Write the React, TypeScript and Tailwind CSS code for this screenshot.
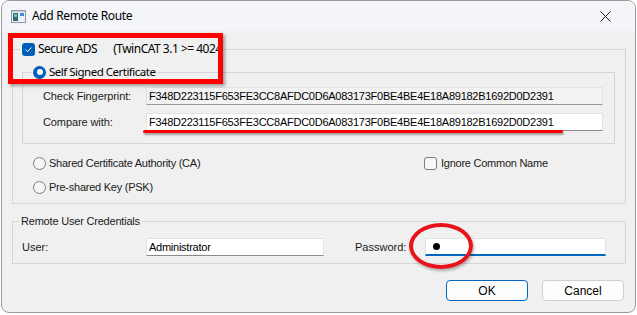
import React from 'react';

const ui = { fontFamily: '"Noto Sans", "Open Sans", sans-serif' };
const classic = { fontFamily: '"Liberation Sans", Arial, sans-serif' };

const fingerprint =
  'F348D223115F653FE3CC8AFDC0D6A083173F0BE4BE4E18A89182B1692D0D2391';

const Check = ({ checked }: { checked?: boolean }) =>
  checked ? (
    <span className="w-[13px] h-[13px] rounded-[3px] bg-[#005fb8] flex items-center justify-center shrink-0">
      <svg width="9" height="9" viewBox="0 0 10 10">
        <path d="M1.8 5.2l2.2 2.2 4.2-4.6" fill="none" stroke="#fff" strokeWidth="1.1" />
      </svg>
    </span>
  ) : (
    <span className="w-[13px] h-[13px] rounded-[3px] border border-[#7d7d7d] bg-[#f7f7f7] shrink-0" />
  );

const Radio = ({ checked }: { checked?: boolean }) =>
  checked ? (
    <span className="w-[13px] h-[13px] rounded-full bg-[#005fb8] flex items-center justify-center shrink-0">
      <span className="w-[6px] h-[6px] rounded-full bg-white" />
    </span>
  ) : (
    <span className="w-[13px] h-[13px] rounded-full border border-[#7d7d7d] bg-[#f5f5f5] shrink-0" />
  );

const Field = ({
  children,
  width,
  readOnly,
  focused
}: {
  children: React.ReactNode;
  width: string;
  readOnly?: boolean;
  focused?: boolean;
}) => (
  <div
    className={`${width} h-[18px] flex items-center pl-[2px] border border-[#e2e2e2] text-[11px] tracking-[-0.25px] text-black ${
      readOnly ? 'bg-[#f2f2f2] border-b-[#999999]' : 'bg-white border-b-[#8a8a8a]'
    } ${focused ? 'border-b-2 border-b-[#0067c0]' : ''}`}
    style={classic}
  >
    {children}
  </div>
);

export default function App() {
  return (
    <div className="relative w-[637px] h-[315px] bg-white overflow-hidden">
      <div className="ml-[1px] w-[635px] h-[313px] border border-[#9c9c9c] rounded-[8px] overflow-hidden bg-[#f0f0f0]">
        {/* title bar */}
        <div className="h-[30px] bg-[#f3f5f9] flex items-center pl-[9px] pr-[24px]">
          <svg width="15" height="13" viewBox="0 0 15 13" className="shrink-0">
            <rect x="0.5" y="0.5" width="14" height="12" fill="#eef1f4" stroke="#8f9aa3" />
            <rect x="2" y="3" width="5" height="8" fill="#2f6d7b" />
            <rect x="3" y="4" width="3" height="3" fill="#79b6c4" />
            <rect x="9" y="3" width="4" height="3" fill="#3c8fd6" />
            <rect x="1" y="1" width="13" height="1.2" fill="#c6cdd4" />
          </svg>
          <span className="ml-[6px] text-[12px] tracking-[-0.35px] text-black" style={ui}>
            Add Remote Route
          </span>
          <svg width="11" height="11" viewBox="0 0 11 11" className="ml-auto">
            <path d="M0.5 0.5l10 10M10.5 0.5l-10 10" stroke="#1a1a1a" strokeWidth="1" />
          </svg>
        </div>

        {/* body */}
        <div className="pl-[10px]">
          <fieldset className="mt-[10px] w-[614px] border border-[#d6d6d6] px-[9px] pb-[8px]">
            <legend className="-ml-[2px] px-[2px] h-[16px]">
              <div className="flex items-center h-[16px] text-[12px] tracking-[-0.5px] text-black" style={ui}>
                <Check checked />
                <span className="ml-[3px]">Secure ADS</span>
                <span className="ml-[16px] whitespace-nowrap">(TwinCAT 3.1 &gt;= 4024</span>
              </div>
            </legend>

            <fieldset className="mt-[7px] w-[593px] border border-[#d6d6d6] pl-[8px] pb-[12px]">
              <legend className="px-[2px] h-[16px]">
                <div className="flex items-center h-[16px] text-[11.5px] tracking-[-0.5px] text-black" style={ui}>
                  <Radio checked />
                  <span className="ml-[3px]">Self Signed Certificate</span>
                </div>
              </legend>
              <div className="pl-[12px] pt-[7px] flex flex-col gap-[8px] text-[11px] tracking-[-0.1px] text-[#1a1a1a]" style={classic}>
                <div className="flex items-center h-[18px]">
                  <span className="w-[103px]">Check Fingerprint:</span>
                  <Field width="w-[457px]" readOnly>
                    {fingerprint}
                  </Field>
                </div>
                <div className="flex items-center h-[18px]">
                  <span className="w-[103px]">Compare with:</span>
                  <Field width="w-[457px]">{fingerprint}</Field>
                </div>
              </div>
            </fieldset>

            <div className="mt-[11px] flex flex-col gap-[8px] text-[11px] tracking-[-0.25px] text-[#1a1a1a]" style={classic}>
              <div className="flex items-center h-[16px]">
                <div className="w-[402px] pl-[11px] flex items-center">
                  <Radio />
                  <span className="ml-[3px]">Shared Certificate Authority (CA)</span>
                </div>
                <Check />
                <span className="ml-[4px]">Ignore Common Name</span>
              </div>
              <div className="flex items-center h-[16px] pl-[11px]">
                <Radio />
                <span className="ml-[3px]">Pre-shared Key (PSK)</span>
              </div>
            </div>
          </fieldset>

          <fieldset className="mt-[10px] w-[614px] border border-[#d6d6d6] px-[9px] pb-[7px]">
            <legend className="-ml-[3px] px-[2px] h-[14px]">
              <span className="text-[11px] tracking-[-0.2px] text-[#1a1a1a] leading-[14px] block" style={classic}>
                Remote User Credentials
              </span>
            </legend>
            <div className="pt-[10px] flex items-center h-[28px] text-[11px] text-[#1a1a1a]" style={classic}>
              <span className="w-[124px]">User:</span>
              <Field width="w-[178px]">Administrator</Field>
              <span className="ml-[31px] w-[70px]">Password:</span>
              <Field width="w-[181px]" focused>
                <span className="ml-[5px] w-[7px] h-[7px] rounded-full bg-black" />
              </Field>
            </div>
          </fieldset>

          <div className="mt-[16px] flex justify-end gap-[14px] pr-[11px] text-[12px] text-black" style={classic}>
            <button className="w-[82px] h-[21px] rounded-[4px] border border-[#0067c0] bg-[#fdfdfd] flex items-center justify-center">
              OK
            </button>
            <button className="w-[82px] h-[21px] rounded-[4px] border border-[#d0d0d0] bg-[#fdfdfd] flex items-center justify-center">
              Cancel
            </button>
          </div>
        </div>
      </div>

      {/* red annotations */}
      <div className="absolute left-[8px] top-[33px] w-[215px] h-[51px] border-[5px] border-[#ff0000] shadow-[2px_2px_3px_rgba(0,0,0,0.35)]" />
      <div className="absolute left-[143px] top-[130px] w-[420px] h-[3px] bg-[#ff0000] rounded-full shadow-[1px_2px_2px_rgba(0,0,0,0.35)]" />
      <div className="absolute left-[409px] top-[223px] w-[64px] h-[46px] rounded-[50%] border-[4px] border-[#e8121a] shadow-[1px_2px_3px_rgba(0,0,0,0.3)]" />
    </div>
  );
}
